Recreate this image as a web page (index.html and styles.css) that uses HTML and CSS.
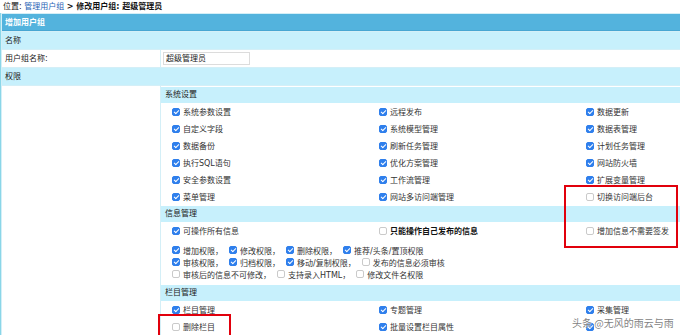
FILE: index.html
```html
<!DOCTYPE html>
<html lang="zh-CN">

<head>
    <meta charset="UTF-8">
    <meta name="viewport" content="width=device-width, initial-scale=1.0">
    <title>修改用户组</title>
    <link rel="stylesheet" href="styles.css">
</head>

<body>
    <div class="crumb">位置: <a href="#">管理用户组</a> <b>&gt; 修改用户组: 超级管理员</b></div>

    <table class="main">
        <colgroup>
            <col class="c1">
            <col class="c2">
        </colgroup>
        <tr><th colspan="2" class="head">增加用户组</th></tr>
        <tr><td colspan="2" class="band">名称</td></tr>
        <tr>
            <td class="white">用户组名称:</td>
            <td class="white"><input class="name-input" type="text" value="超级管理员"></td>
        </tr>
        <tr><td colspan="2" class="band">权限</td></tr>
        <tr>
            <td class="white"></td>
            <td class="perm">
                <!-- 系统设置 -->
                <div class="ghead">系统设置</div>
                <div class="grid">
                    <div class="item"><span class="cb on"></span>系统参数设置</div>
                    <div class="item"><span class="cb on"></span>远程发布</div>
                    <div class="item"><span class="cb on"></span>数据更新</div>
                    <div class="item"><span class="cb on"></span>自定义字段</div>
                    <div class="item"><span class="cb on"></span>系统模型管理</div>
                    <div class="item"><span class="cb on"></span>数据表管理</div>
                    <div class="item"><span class="cb on"></span>数据备份</div>
                    <div class="item"><span class="cb on"></span>刷新任务管理</div>
                    <div class="item"><span class="cb on"></span>计划任务管理</div>
                    <div class="item"><span class="cb on"></span>执行SQL语句</div>
                    <div class="item"><span class="cb on"></span>优化方案管理</div>
                    <div class="item"><span class="cb on"></span>网站防火墙</div>
                    <div class="item"><span class="cb on"></span>安全参数设置</div>
                    <div class="item"><span class="cb on"></span>工作流管理</div>
                    <div class="item"><span class="cb on"></span>扩展变量管理</div>
                    <div class="item"><span class="cb on"></span>菜单管理</div>
                    <div class="item"><span class="cb on"></span>网站多访问端管理</div>
                    <div class="item"><span class="cb"></span>切换访问端后台</div>
                </div>

                <!-- 信息管理 -->
                <div class="ghead">信息管理</div>
                <div class="grid">
                    <div class="item"><span class="cb on"></span>可操作所有信息</div>
                    <div class="item strong"><span class="cb"></span>只能操作自己发布的信息</div>
                    <div class="item"><span class="cb"></span>增加信息不需要签发</div>
                </div>
                <div class="lines">
                    <div class="line">
                        <span class="item"><span class="cb on"></span>增加权限，</span>
                        <span class="item"><span class="cb on"></span>修改权限，</span>
                        <span class="item"><span class="cb on"></span>删除权限，</span>
                        <span class="item"><span class="cb on"></span>推荐/头条/置顶权限</span>
                    </div>
                    <div class="line">
                        <span class="item"><span class="cb on"></span>审核权限，</span>
                        <span class="item"><span class="cb on"></span>归档权限，</span>
                        <span class="item"><span class="cb on"></span>移动/复制权限，</span>
                        <span class="item"><span class="cb"></span>发布的信息必须审核</span>
                    </div>
                    <div class="line">
                        <span class="item"><span class="cb"></span>审核后的信息不可修改，</span>
                        <span class="item"><span class="cb"></span>支持录入HTML，</span>
                        <span class="item"><span class="cb"></span>修改文件名权限</span>
                    </div>
                </div>

                <!-- 栏目管理 -->
                <div class="ghead">栏目管理</div>
                <div class="grid">
                    <div class="item"><span class="cb on"></span>栏目管理</div>
                    <div class="item"><span class="cb on"></span>专题管理</div>
                    <div class="item"><span class="cb on"></span>采集管理</div>
                    <div class="item"><span class="cb"></span>删除栏目</div>
                    <div class="item"><span class="cb on"></span>批量设置栏目属性</div>
                    <div class="item"><span class="cb on"></span></div>
                </div>
            </td>
        </tr>
    </table>

    <div class="mark mark-a"></div>
    <div class="mark mark-b"></div>
    <div class="wm">头条 @无风的雨云与雨</div>
</body>

</html>
```

FILE: styles.css
```css
html, body {
    margin: 0;
    overflow: hidden;
    background: #fff;
}
body {
    position: relative;
    font: 8px/1 "DejaVu Sans", "Noto Sans CJK SC", sans-serif;
    color: #222;
}

.crumb {
    height: 13px;
    line-height: 13px;
    padding-left: 3px;
    white-space: nowrap;
    color: #111;
}
.crumb a {
    color: #1f64b6;
    text-decoration: none;
}

.main {
    width: 840px;
    table-layout: fixed;
    border-collapse: separate;
    border-spacing: 1px;
    background: #d4eff7;
    border-left: 1px solid #8ad6e8;
}
.main .c1 {
    width: 158px;
}
.main th , .main td {
    height: 17px;
    line-height: 17px;
    padding: 0 3px;
    text-align: left;
    white-space: nowrap;
    font-weight: normal;
}
.main .head {
    background: #53b3dd;
    color: #fff;
    font-weight: bold;
    box-shadow: inset 0 -1px 0 #47a6d2;
}
.main .band {
    background: #c7f0fc;
}
.main .white {
    background: #fff;
}

.name-input {
    width: 87px;
    height: 13px;
    box-sizing: border-box;
    margin: 0 0 0 -1px;
    padding: 0 2px;
    border: 1px solid #dcdcdc;
    font: inherit;
    color: #222;
    vertical-align: middle;
}

.main .perm {
    background: #fff;
    padding: 1px 0 0;
    vertical-align: top;
    line-height: normal;
}
.ghead {
    height: 16px;
    line-height: 16px;
    padding-left: 4px;
    background: #c7f0fc;
}
.grid {
    display: grid;
    grid-template-columns: repeat(3, 207px);
    grid-auto-rows: 17px;
    align-items: center;
    padding: 0 0 1px 11px;
}
.item {
    display: flex;
    align-items: center;
    gap: 3px;
    color: #333;
}
.item.strong {
    font-weight: bold;
    color: #111;
}

.lines {
    padding: 4px 0 5px 11px;
}
.line {
    display: flex;
    align-items: center;
    height: 12px;
}
.line .item {
    margin-right: 6px;
}

.cb {
    position: relative;
    flex: none;
    width: 8px;
    height: 8px;
    box-sizing: border-box;
    border: 1px solid #cacaca;
    border-radius: 2px;
    background: #fff;
}
.cb.on {
    background: #2f7fec;
    border-color: #2f7fec;
}
.cb.on::after {
    content: "";
    position: absolute;
    left: 1.6px;
    top: 0;
    width: 2px;
    height: 4px;
    border: solid #fff;
    border-width: 0 1.2px 1.2px 0;
    transform: rotate(45deg);
}

.mark {
    position: absolute;
    box-sizing: border-box;
    border: 2px solid #e1000c;
}
.mark-a {
    left: 564px;
    top: 185px;
    width: 114px;
    height: 63px;
}
.mark-b {
    left: 158px;
    top: 314px;
    width: 73px;
    height: 40px;
}

.wm {
    position: absolute;
    left: 572px;
    top: 318px;
    font: 10px/1 "Noto Sans CJK SC", sans-serif;
    color: rgba(105, 105, 105, 0.85);
    text-shadow: 0 0 2px #fff, 0 0 1px #fff;
    white-space: nowrap;
}
```
